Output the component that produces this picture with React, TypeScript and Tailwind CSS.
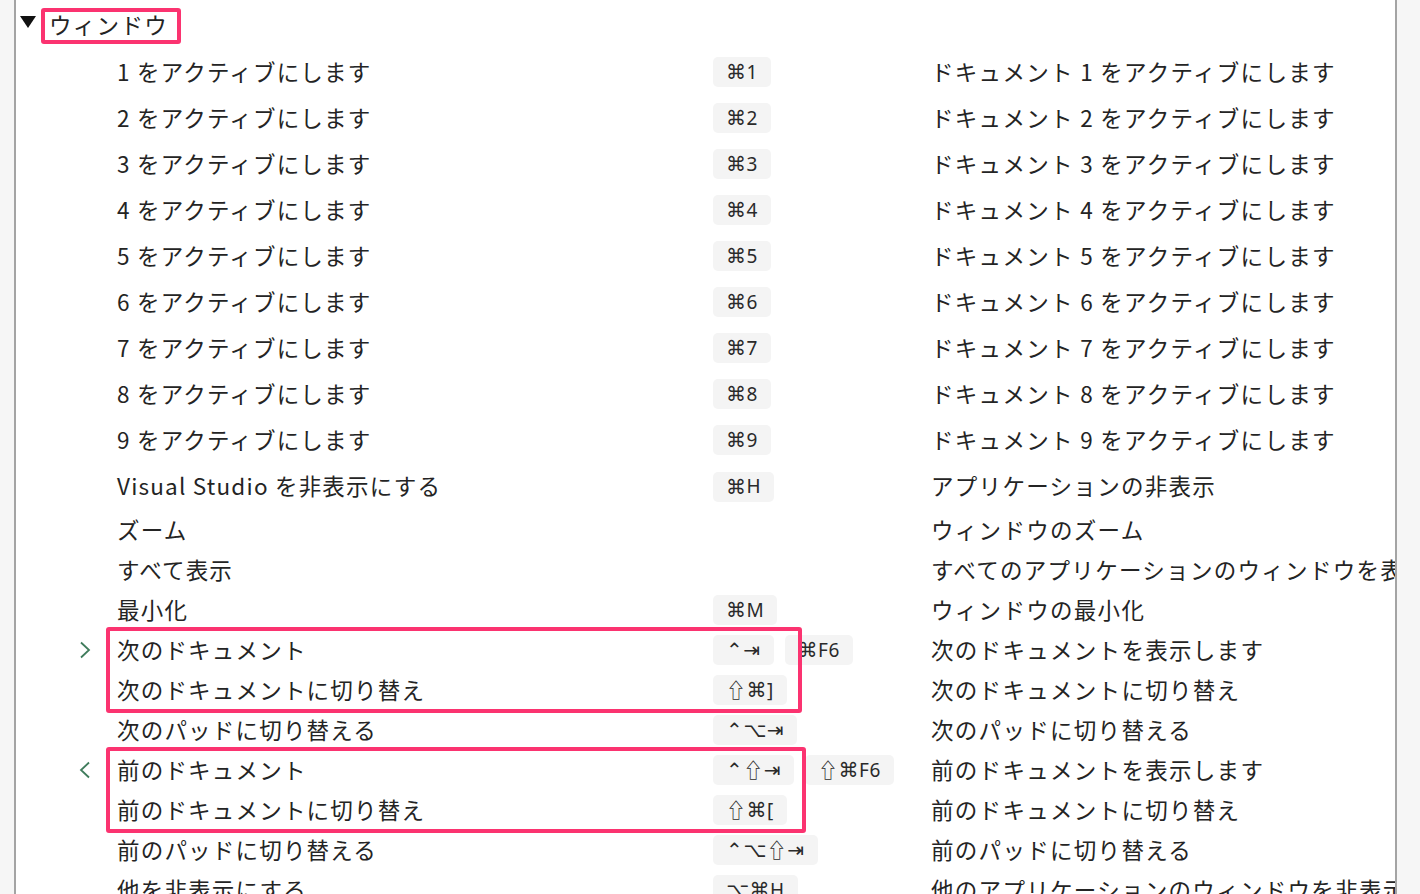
import React from "react";

type Row = {
  label: string;
  keys: string[];
  desc: string;
  h: number;
  chevron?: "right" | "left";
};

const rows: Row[] = [
  ...[1, 2, 3, 4, 5, 6, 7, 8, 9].map((n) => ({
    label: `${n} をアクティブにします`,
    keys: [`⌘${n}`],
    desc: `ドキュメント ${n} をアクティブにします`,
    h: 46,
  })),
  { label: "Visual Studio を非表示にする", keys: ["⌘H"], desc: "アプリケーションの非表示", h: 47 },
  { label: "ズーム", keys: [], desc: "ウィンドウのズーム", h: 40 },
  { label: "すべて表示", keys: [], desc: "すべてのアプリケーションのウィンドウを表示", h: 40 },
  { label: "最小化", keys: ["⌘M"], desc: "ウィンドウの最小化", h: 40 },
  { label: "次のドキュメント", keys: ["⌃⇥", "⌘F6"], desc: "次のドキュメントを表示します", h: 40, chevron: "right" },
  { label: "次のドキュメントに切り替え", keys: ["⇧⌘]"], desc: "次のドキュメントに切り替え", h: 40 },
  { label: "次のパッドに切り替える", keys: ["⌃⌥⇥"], desc: "次のパッドに切り替える", h: 40 },
  { label: "前のドキュメント", keys: ["⌃⇧⇥", "⇧⌘F6"], desc: "前のドキュメントを表示します", h: 40, chevron: "left" },
  { label: "前のドキュメントに切り替え", keys: ["⇧⌘["], desc: "前のドキュメントに切り替え", h: 40 },
  { label: "前のパッドに切り替える", keys: ["⌃⌥⇧⇥"], desc: "前のパッドに切り替える", h: 40 },
  { label: "他を非表示にする", keys: ["⌥⌘H"], desc: "他のアプリケーションのウィンドウを非表示", h: 40 },
];

function Chevron({ dir }: { dir: "right" | "left" }) {
  return (
    <svg width="12" height="18" viewBox="0 0 12 18" className="absolute left-[63px]">
      <polyline
        points={dir === "right" ? "2,1.5 10,9 2,16.5" : "10,1.5 2,9 10,16.5"}
        fill="none"
        stroke="#3f7c5c"
        strokeWidth="1.8"
      />
    </svg>
  );
}

const dejavu = new Set(["⌘", "⌃", "⌥", "⇥"]);

function KeyText({ text }: { text: string }) {
  return (
    <>
      {Array.from(text).map((c, i) =>
        dejavu.has(c) ? (
          <span key={i} className="font-['DejaVu_Sans',sans-serif] text-[20px]">
            {c}
          </span>
        ) : c === "⇧" ? (
          <span key={i} className="font-['Noto_Sans_CJK_JP',sans-serif] text-[20px]">
            {c}
          </span>
        ) : (
          <span key={i} className="font-['Noto_Sans','Noto_Sans_CJK_JP',sans-serif] text-[19px]">
            {c}
          </span>
        )
      )}
    </>
  );
}

export default function App() {
  return (
    <div className="flex h-[894px] w-[1420px] overflow-hidden bg-[#f6f6f6] font-['Noto_Sans_CJK_JP','Noto_Sans',sans-serif] text-[#242424]">
      <div className="w-[14px] shrink-0" />
      <div className="relative w-[1383px] shrink-0 overflow-hidden border-x-2 border-[#a4a4a4] bg-white">
        {/* header */}
        <div className="flex h-[49px] items-center">
          <svg width="16" height="13" viewBox="0 0 16 13" className="ml-[4px] mt-[-4px]">
            <polygon points="0,0 16,0 8,12" fill="#111" />
          </svg>
          <span className="ml-[13px] text-[22.5px] leading-none tracking-[1.3px]">ウィンドウ</span>
        </div>
        {rows.map((r, i) => (
          <div key={i} className="relative flex items-center whitespace-nowrap" style={{ height: r.h }}>
            <div className="relative flex h-full w-[101px] shrink-0 items-center">
              {r.chevron && <Chevron dir={r.chevron} />}
            </div>
            <div className="mt-[-2px] w-[596px] shrink-0 text-[22.5px] leading-none tracking-[1.2px]">{r.label}</div>
            <div className="flex w-[218px] shrink-0 items-center gap-[11px]">
              {r.keys.map((k, j) => (
                <span
                  key={j}
                  className="flex h-[30px] items-center rounded-[5px] bg-[#f4f4f4] px-[13px] leading-none tracking-[0.5px] text-[#2a2a2a]"
                >
                  <KeyText text={k} />
                </span>
              ))}
            </div>
            <div className="mt-[-2px] text-[22.5px] leading-none tracking-[1.3px]">{r.desc}</div>
          </div>
        ))}
        {/* annotation boxes */}
        <div className="pointer-events-none absolute left-[25px] top-[8px] h-[36px] w-[140px] rounded-[3px] border-4 border-[#fb3370]" />
        <div className="pointer-events-none absolute left-[90px] top-[627px] h-[86px] w-[696px] rounded-[3px] border-4 border-[#fb3370]" />
        <div className="pointer-events-none absolute left-[90px] top-[747px] h-[86px] w-[700px] rounded-[3px] border-4 border-[#fb3370]" />
      </div>
    </div>
  );
}
